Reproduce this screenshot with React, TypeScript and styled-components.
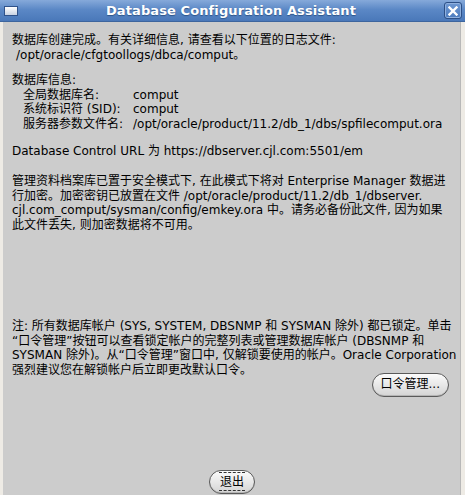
import styled, { createGlobalStyle } from 'styled-components';

const GlobalStyle = createGlobalStyle`
  html, body {
    margin: 0;
    padding: 0;
    background: #cccccc;
  }
  body {
    font-family: "DejaVu Sans", "Noto Sans CJK SC", sans-serif;
  }
`

const Window = styled.div`
  width: 465px;
  height: 495px;
  display: flex;
  flex-direction: column;
  overflow: hidden;
`

const TitleBar = styled.div`
  height: 22px;
  flex-shrink: 0;
  display: flex;
  align-items: center;
  justify-content: space-between;
  padding: 0 3px 0 4px;
  background: linear-gradient(#86a9da, #5b88c6 45%, #4a78b9);
  border-bottom: 1px solid #3d659e;
  box-sizing: border-box;
`

const Title = styled.div`
  flex: 1;
  text-align: center;
  color: #ffffff;
  font-weight: bold;
  font-size: 13px;
  letter-spacing: 0.1px;
  text-shadow: 0 1px 1px #2e5489;
`

const MenuIcon = styled.div`
  width: 14px;
  height: 10px;
  border: 1px solid #2f528a;
  background: linear-gradient(#ffffff, #c9d3e3);
  box-sizing: border-box;
`

const CloseButton = styled.div`
  width: 18px;
  height: 17px;
  border: 1px solid #2c4f86;
  border-radius: 3px;
  background: linear-gradient(#6f98d2, #4c7bbd);
  box-shadow: inset 0 0 0 1px #8fb0de;
  display: flex;
  align-items: center;
  justify-content: center;
  box-sizing: border-box;
`

const Frame = styled.div`
  flex: 1;
  display: flex;
  flex-direction: column;
  border-left: 3px solid #eeebe5;
  border-right: 4px solid #eeebe5;
  box-shadow: inset -1px 0 0 #b8b8b8;
  background: #cccccc;
  padding: 11px 0 0 9px;
  color: #000000;
  font-size: 12px;
  line-height: 14.5px;
`

const Block = styled.div<{ $top?: number }>`
  margin-top: ${(p) => p.$top ?? 0}px;
  white-space: nowrap;
`

const Line = styled.div<{ $indent?: number }>`
  padding-left: ${(p) => p.$indent ?? 0}px;
`

const InfoGrid = styled.div`
  display: grid;
  grid-template-columns: 110px auto;
  padding-left: 11px;
`

const ButtonRow = styled.div<{ $align: string; $top: number }>`
  display: flex;
  justify-content: ${(p) => p.$align};
  margin-top: ${(p) => p.$top}px;
  padding-right: ${(p) => (p.$align === 'flex-end' ? 12 : 9)}px;
`

const PillButton = styled.div<{ $focused?: boolean }>`
  height: 24px;
  padding: 0 ${(p) => (p.$focused ? 9 : 8)}px;
  border: 1px solid #5a5a5a;
  border-radius: 12px;
  background: linear-gradient(#fbfbfb, #e4e4e4 60%, #d4d4d4);
  box-shadow: inset 0 -1px 0 #b5b5b5;
  display: flex;
  align-items: center;
  font-size: 12px;
  box-sizing: border-box;
`

const FocusLabel = styled.span`
  border-top: 1px dashed #333333;
  border-bottom: 1px dashed #333333;
  padding: 2px 1px 1px;
  line-height: 14px;
`

const App = (): JSX.Element => {
  return (
    <>
      <GlobalStyle />
      <Window>
        <TitleBar>
          <MenuIcon />
          <Title>Database Configuration Assistant</Title>
          <CloseButton>
            <svg width="10" height="10" viewBox="0 0 10 10">
              <path d="M1.5 1.5 L8.5 8.5 M8.5 1.5 L1.5 8.5" stroke="#ffffff" strokeWidth="2.4" strokeLinecap="square" />
            </svg>
          </CloseButton>
        </TitleBar>
        <Frame>
          <Block>
            <Line>数据库创建完成。有关详细信息, 请查看以下位置的日志文件:</Line>
            <Line $indent={4}>/opt/oracle/cfgtoollogs/dbca/comput。</Line>
          </Block>
          <Block $top={11}>
            <Line>数据库信息:</Line>
            <InfoGrid>
              <span>全局数据库名:</span>
              <span>comput</span>
              <span>系统标识符 (SID):</span>
              <span>comput</span>
              <span>服务器参数文件名:</span>
              <span>/opt/oracle/product/11.2/db_1/dbs/spfilecomput.ora</span>
            </InfoGrid>
          </Block>
          <Block $top={13}>
            <Line>Database Control URL 为 https://dbserver.cjl.com:5501/em</Line>
          </Block>
          <Block $top={15.5}>
            <Line>管理资料档案库已置于安全模式下, 在此模式下将对 Enterprise Manager 数据进</Line>
            <Line>行加密。加密密钥已放置在文件 /opt/oracle/product/11.2/db_1/dbserver.</Line>
            <Line>cjl.com_comput/sysman/config/emkey.ora 中。请务必备份此文件, 因为如果</Line>
            <Line>此文件丢失, 则加密数据将不可用。</Line>
          </Block>
          <Block $top={87}>
            <Line>注: 所有数据库帐户 (SYS, SYSTEM, DBSNMP 和 SYSMAN 除外) 都已锁定。单击</Line>
            <Line>“口令管理”按钮可以查看锁定帐户的完整列表或管理数据库帐户 (DBSNMP 和</Line>
            <Line>SYSMAN 除外)。从“口令管理”窗口中, 仅解锁要使用的帐户。Oracle Corporation</Line>
            <Line>强烈建议您在解锁帐户后立即更改默认口令。</Line>
          </Block>
          <ButtonRow $align="flex-end" $top={-4.5}>
            <PillButton>口令管理...</PillButton>
          </ButtonRow>
          <ButtonRow $align="center" $top={73}>
            <PillButton $focused>
              <FocusLabel>退出</FocusLabel>
            </PillButton>
          </ButtonRow>
        </Frame>
      </Window>
    </>
  )
}

export default App
